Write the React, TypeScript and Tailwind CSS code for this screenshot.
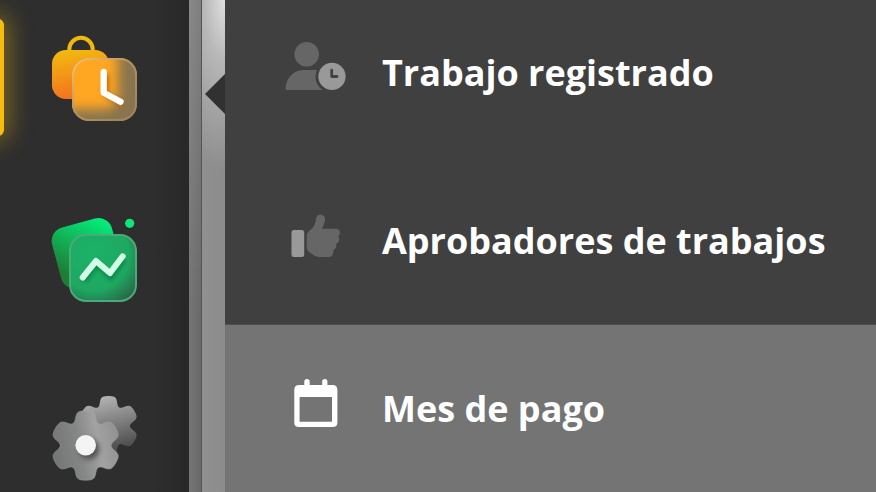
import type { ReactNode } from "react"

// outline of a six-toothed gear with soft corners
function gearPath(cx: number, cy: number, inner: number, outer: number) {
  const points: string[] = []
  for (let deg = 0; deg < 360; deg += 3) {
    const a = (deg * Math.PI) / 180
    const t = (Math.tanh(1.8 * (Math.cos(6 * a) + 0.52)) + 0.698) / 1.69
    const r = inner + (outer - inner) * t
    points.push(`${(cx + r * Math.sin(a)).toFixed(2)} ${(cy - r * Math.cos(a)).toFixed(2)}`)
  }
  return `M${points.join("L")}Z`
}

function WorkIcon() {
  return (
    <svg viewBox="0 0 93 90" className="h-[90px] w-[93px]" aria-hidden="true">
      <defs>
        <linearGradient id="bag" x1="0.3" y1="0" x2="0.5" y2="1">
          <stop offset="0" stopColor="#f2b90f" />
          <stop offset="1" stopColor="#f46f20" />
        </linearGradient>
        <linearGradient id="workEdge" x1="0" y1="0" x2="1" y2="1">
          <stop offset="0" stopColor="#ffc06a" />
          <stop offset="0.5" stopColor="#ad905f" />
          <stop offset="1" stopColor="#9a845e" />
        </linearGradient>
        <clipPath id="workClip">
          <rect x="24" y="24" width="65" height="63" rx="17" />
        </clipPath>
        <filter id="workBlur" x="-50%" y="-50%" width="200%" height="200%">
          <feGaussianBlur stdDeviation="6" />
        </filter>
        <filter id="handBlur" x="-50%" y="-50%" width="200%" height="200%">
          <feGaussianBlur stdDeviation="2" />
        </filter>
      </defs>
      <circle cx="33" cy="15.5" r="11.7" fill="none" stroke="#f0b90e" strokeWidth="4" />
      <rect x="4" y="16" width="57" height="49" rx="14" fill="url(#bag)" />
      <g clipPath="url(#workClip)">
        <rect x="24" y="24" width="65" height="63" fill="#89744f" />
        <rect x="0" y="0" width="70" height="75" rx="14" fill="#ffa620" filter="url(#workBlur)" />
        <path d="M58 40V60L75 70" fill="none" stroke="#b55f05" strokeOpacity="0.8" strokeWidth="6" filter="url(#handBlur)" />
      </g>
      <rect x="25" y="25" width="63" height="61" rx="16" fill="none" stroke="url(#workEdge)" strokeWidth="2" />
      <path d="M55.7 38V58.7L72.5 67.8" fill="none" stroke="#fff" strokeWidth="6.4" strokeLinecap="round" strokeLinejoin="round" />
    </svg>
  )
}

function StatsIcon() {
  return (
    <svg viewBox="0 0 93 90" className="h-[90px] w-[93px]" aria-hidden="true">
      <defs>
        <linearGradient id="card" x1="0.9" y1="0" x2="0.15" y2="0.8">
          <stop offset="0" stopColor="#02f27e" />
          <stop offset="1" stopColor="#1f7c35" />
        </linearGradient>
        <radialGradient id="statsGlass" cx="0.35" cy="0.3" r="0.9">
          <stop offset="0" stopColor="#1bb268" />
          <stop offset="0.6" stopColor="#1ea862" />
          <stop offset="1" stopColor="#2a5a42" />
        </radialGradient>
        <filter id="lineBlur" x="-30%" y="-30%" width="160%" height="180%">
          <feGaussianBlur stdDeviation="2" />
        </filter>
      </defs>
      <rect x="0.5" y="17" width="62" height="63" rx="14" transform="rotate(-15 0.5 17)" fill="url(#card)" />
      <circle cx="81.7" cy="9.3" r="4.6" fill="#0be87b" />
      <rect x="22" y="21" width="66" height="66" rx="16" fill="url(#statsGlass)" stroke="#4ba97a" strokeWidth="2" />
      <path d="M36 67L49 50L63 63L76 45" fill="none" stroke="#087a3d" strokeOpacity="0.7" strokeWidth="6" filter="url(#lineBlur)" />
      <path d="M34.7 63.5L48 47L62 59L74.7 42.3" fill="none" stroke="#d3ffe5" strokeWidth="6" strokeLinecap="round" strokeLinejoin="round" />
    </svg>
  )
}

function SettingsIcon() {
  return (
    <svg viewBox="0 0 93 90" className="h-[90px] w-[93px]" aria-hidden="true">
      <defs>
        <linearGradient id="gearBack" x1="0.4" y1="0" x2="0.6" y2="0.9">
          <stop offset="0" stopColor="#b4b4b4" />
          <stop offset="1" stopColor="#4c4c4c" />
        </linearGradient>
        <linearGradient id="gearFront" x1="0" y1="0.6" x2="1" y2="0.4">
          <stop offset="0" stopColor="#747676" />
          <stop offset="0.4" stopColor="#858686" />
          <stop offset="0.7" stopColor="#a2a2a2" />
          <stop offset="1" stopColor="#929292" />
        </linearGradient>
        <filter id="hubBlur" x="-50%" y="-50%" width="200%" height="200%">
          <feGaussianBlur stdDeviation="2.5" />
        </filter>
      </defs>
      <path d={gearPath(60.5, 32, 21.5, 30)} fill="url(#gearBack)" />
      <path d={gearPath(37.7, 51.5, 25.5, 34.8)} fill="url(#gearFront)" stroke="#a5a5a5" strokeOpacity="0.45" />
      <circle cx="41" cy="55" r="10.5" fill="#444" fillOpacity="0.8" filter="url(#hubBlur)" />
      <circle cx="37.7" cy="51.3" r="10.3" fill="#f4f4f4" />
    </svg>
  )
}

function UserClockIcon() {
  return (
    <svg viewBox="0 0 64 64" className="size-16 shrink-0" aria-hidden="true">
      <circle cx="22.7" cy="14.2" r="12.3" fill="#666" />
      <path d="M3 50Q1.3 50 1.5 48C2.5 37 10 30 20 30H33Q31.5 33 31.5 36.5C31.5 42 34 47 39 50Z" fill="#666" />
      <circle cx="48" cy="36.4" r="13.6" fill="#999" />
      <path d="M47.7 30.2V36.5H53" fill="none" stroke="#424242" strokeWidth="2.8" strokeLinecap="round" strokeLinejoin="round" />
    </svg>
  )
}

function ThumbIcon() {
  return (
    <svg viewBox="0 0 64 64" className="size-16 shrink-0" aria-hidden="true">
      <rect x="7.5" y="22" width="12.7" height="27" rx="2.5" fill="#999" />
      <path
        d="M22.7 29C22.7 26 24 24 26 22.3C29.5 19.5 31 17 31.7 12.5L32.3 9.7C33 7.5 34.7 6.4 37 6.8C40 7.3 41.5 9.5 41 12C40.5 15 39.5 18 37.8 20.8H52C54.5 20.8 56 22.5 56 24.7C56 26.3 55.2 27.6 53.8 28.3C55 29 55.4 30.2 55.2 31.6C55 33.9 53.9 35.3 52 35.8C52.9 38 52 41 49.3 42C50 46 48 49 44.5 49H36C33.5 49 31.5 48.3 29.5 47L25.5 44.3C23.7 43 22.7 41.3 22.7 39Z"
        fill="#666"
      />
    </svg>
  )
}

function CalendarIcon() {
  return (
    <svg viewBox="0 0 64 64" className="size-16 shrink-0" aria-hidden="true">
      <path
        fillRule="evenodd"
        d="M20.3 9V5.5Q20.3 3 23 3T25.7 5.5V9H38.2V5.5Q38.2 3 40.8 3T43.4 5.5V9H48.5Q53.4 9 53.4 14V46.5Q53.4 51 48.5 51H15Q10.3 51 10.3 46.5V14Q10.3 9 15 9ZM15.6 21V45.8H48V21Z"
        fill="#fff"
      />
    </svg>
  )
}

interface MenuEntry {
  label: string
  icon: ReactNode
  active?: boolean
}

const sideItems: MenuEntry[] = [
  { label: "Trabajo", icon: <WorkIcon />, active: true },
  { label: "Estadísticas", icon: <StatsIcon /> },
  { label: "Ajustes", icon: <SettingsIcon /> },
]

const menuItems: MenuEntry[] = [
  { label: "Trabajo registrado", icon: <UserClockIcon /> },
  { label: "Aprobadores de trabajos", icon: <ThumbIcon /> },
  { label: "Mes de pago", icon: <CalendarIcon />, active: true },
]

export default function App() {
  return (
    <div className="flex h-screen overflow-hidden bg-[#404040] font-['Open_Sans',sans-serif]">
      <nav className="w-[189px] shrink-0 bg-linear-to-r from-[#2e2e2e] from-80% to-[#282828]">
        <ul className="-mt-[11px]">
          {sideItems.map((item) => (
            <li key={item.label} className="relative">
              {item.active && (
                <span className="absolute top-[30px] -left-4 h-[117px] w-5 rounded-r-md bg-[#f5bd10] shadow-[0_0_24px_4px_#f5bd1070]" />
              )}
              <button type="button" aria-label={item.label} className="flex h-[180px] w-full items-center justify-center">
                {item.icon}
              </button>
            </li>
          ))}
        </ul>
      </nav>

      <div className="w-[13px] shrink-0 border-r border-[#555] bg-linear-to-r from-[#747474] to-[#696969]">
        <div className="h-80 bg-linear-to-b from-white/15 to-transparent" />
      </div>

      <div className="relative w-[23px] shrink-0 bg-linear-to-r from-[#909090] to-[#8c8c8c]">
        <div className="h-48 bg-[radial-gradient(ellipse_60px_170px_at_top_right,#e0e0e0_0%,#b8b8b8_35%,#b8b8b800_100%)]" />
        <span className="absolute top-[74px] right-0 h-10 w-5 bg-[#313131] [clip-path:polygon(100%_0,100%_100%,0_50%)]" />
      </div>

      <ul className="-mt-3 min-w-0 flex-1">
        {menuItems.map((item) => (
          <li key={item.label}>
            <a
              href="#"
              className={`flex h-[168px] items-center gap-[34px] pl-[59px] text-4xl font-bold whitespace-nowrap text-white ${
                item.active ? "bg-[#747474] shadow-[inset_0_1px_#4e4e4e]" : "bg-[#404040]"
              }`}
            >
              {item.icon}
              <span className="pt-0.5">{item.label}</span>
            </a>
          </li>
        ))}
      </ul>
    </div>
  )
}
